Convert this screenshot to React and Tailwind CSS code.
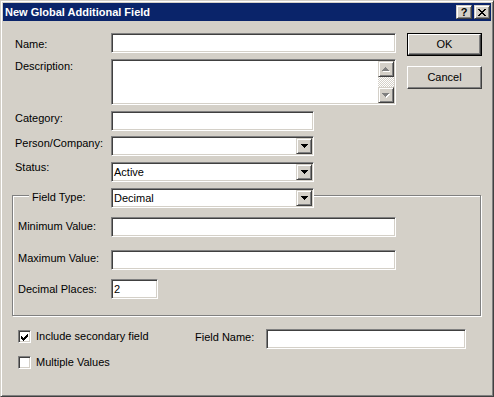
import React from 'react'

const sunken =
  'border border-t-[#808080] border-l-[#808080] border-r-white border-b-white shadow-[inset_1px_1px_0_#404040,inset_-1px_-1px_0_#d4d0c8] bg-white p-[1px]'
const raised =
  'border border-t-[#d4d0c8] border-l-[#d4d0c8] border-r-[#404040] border-b-[#404040] shadow-[inset_1px_1px_0_#fff,inset_-1px_-1px_0_#808080] bg-[#d4d0c8]'
const pushBtn =
  'border border-t-white border-l-white border-r-[#404040] border-b-[#404040] shadow-[inset_-1px_-1px_0_#808080] bg-[#d4d0c8]'

// pixel arrows, classic 7x4
const DOWN = 'M0 0h7v1H0z M1 1h5v1H1z M2 2h3v1H2z M3 3h1v1H3z'
const UP = 'M3 0h1v1H3z M2 1h3v1H2z M1 2h5v1H1z M0 3h7v1H0z'
const CHECK =
  'M6 0h1v1h-1z M5 1h2v1h-2z M0 2h1v1H0z M4 2h3v1H4z M0 3h2v1H0z M3 3h3v1H3z M0 4h5v1H0z M1 5h3v1H1z M2 6h1v1H2z'
const CLOSE =
  'M0 0h2v1H0z M6 0h2v1H6z M1 1h2v1H1z M5 1h2v1H5z M2 2h4v1H2z M3 3h2v1H3z M2 4h4v1H2z M1 5h2v1H1z M5 5h2v1H5z M0 6h2v1H0z M6 6h2v1H6z'

function Arrow({ d, disabled }) {
  if (disabled) {
    return (
      <svg width="8" height="5" shapeRendering="crispEdges">
        <path d={d} fill="#fff" transform="translate(1 1)" />
        <path d={d} fill="#808080" />
      </svg>
    )
  }
  return (
    <svg width="7" height="4" shapeRendering="crispEdges">
      <path d={d} fill="#000" />
    </svg>
  )
}

function Edit({ w, children }) {
  return (
    <div className={`${sunken} ${w} h-[20px] flex items-center`}>
      <span className="pl-[1px]">{children}</span>
    </div>
  )
}

function Combo({ value }) {
  return (
    <div className={`${sunken} w-[203px] h-[20px] flex items-center`}>
      <span className="flex-1 pl-[1px]">{value}</span>
      <div className={`${raised} w-[16px] h-[16px] flex items-center justify-center`}>
        <Arrow d={DOWN} />
      </div>
    </div>
  )
}

function Checkbox({ checked }) {
  return (
    <div className={`${sunken} w-[13px] h-[13px] p-[2px] flex items-start`}>
      {checked && (
        <svg width="7" height="7" shapeRendering="crispEdges" className="mt-[1px]">
          <path d={CHECK} fill="#000" />
        </svg>
      )}
    </div>
  )
}

export default function App() {
  return (
    <div className="w-[494px] h-[397px] bg-[#d4d0c8] border border-t-[#d4d0c8] border-l-[#d4d0c8] border-r-[#404040] border-b-[#404040] shadow-[inset_1px_1px_0_#fff,inset_-1px_-1px_0_#808080] p-[2px] flex flex-col overflow-hidden font-['Liberation_Sans',Arial,sans-serif] text-[11px] leading-[13px] text-black">
      {/* Title bar */}
      <div className="h-[18px] bg-[#0a246a] flex items-center pl-[2px] pr-[1px] gap-[2px]">
        <span className="flex-1 text-white font-bold">New Global Additional Field</span>
        <div className={`${raised} w-[16px] h-[14px] flex items-center justify-center font-bold text-[11px] leading-none`}>?</div>
        <div className={`${raised} w-[16px] h-[14px] flex items-center justify-center`}>
          <svg width="8" height="7" shapeRendering="crispEdges">
            <path d={CLOSE} fill="#000" />
          </svg>
        </div>
      </div>

      <div className="flex-1 px-[9px] flex flex-col">
        {/* Top fields + buttons */}
        <div className="flex pl-[3px] pt-[12px] gap-[11px]">
          <div className="w-[381px] flex flex-col">
            <div className="flex items-start">
              <span className="w-[96px] pt-[5px]">Name:</span>
              <Edit w="w-[285px]" />
            </div>
            <div className="flex items-start mt-[6px]">
              <span className="w-[96px] pt-[1px]">Description:</span>
              <div className={`${sunken} w-[285px] h-[46px] flex`}>
                <div className="flex-1" />
                <div className="w-[16px] flex flex-col">
                  <div className={`${raised} h-[16px] flex items-center justify-center`}>
                    <Arrow d={UP} disabled />
                  </div>
                  <div className="flex-1 bg-[image:repeating-conic-gradient(#fff_0_25%,#d4d0c8_0_50%)] bg-[length:2px_2px]" />
                  <div className={`${raised} h-[16px] flex items-center justify-center`}>
                    <Arrow d={DOWN} disabled />
                  </div>
                </div>
              </div>
            </div>
            <div className="flex items-start mt-[6px]">
              <span className="w-[96px] pt-[1px]">Category:</span>
              <Edit w="w-[203px]" />
            </div>
            <div className="flex items-start mt-[5px]">
              <span className="w-[96px] pt-[1px]">Person/Company:</span>
              <Combo value="" />
            </div>
            <div className="flex items-start mt-[6px]">
              <span className="w-[96px] -mt-[1px]">Status:</span>
              <Combo value="Active" />
            </div>
          </div>

          <div className="flex flex-col gap-[10px]">
            <div className="w-[75px] h-[23px] border border-black">
              <div className={`${pushBtn} h-full flex items-center justify-center`}>OK</div>
            </div>
            <div className={`${pushBtn} w-[75px] h-[23px] flex items-center justify-center`}>Cancel</div>
          </div>
        </div>

        {/* Field type group */}
        <div className="mt-[13px] w-[469px] border border-[#808080] shadow-[inset_1px_1px_0_#fff,1px_1px_0_#fff] pb-[16px] flex flex-col">
          <div className="-mt-[8px] ml-[16px] flex w-fit">
            <span className="w-[82px] h-[20px] pl-[3px] pt-[3px] bg-[#d4d0c8]">Field Type:</span>
            <Combo value="Decimal" />
          </div>
          <div className="flex items-start mt-[9px] pl-[5px]">
            <span className="w-[93px] pt-[3px]">Minimum Value:</span>
            <Edit w="w-[285px]" />
          </div>
          <div className="flex items-start mt-[13px] pl-[5px]">
            <span className="w-[93px] pt-[2px]">Maximum Value:</span>
            <Edit w="w-[285px]" />
          </div>
          <div className="flex items-start mt-[9px] pl-[5px]">
            <span className="w-[93px] pt-[4px]">Decimal Places:</span>
            <Edit w="w-[47px]">2</Edit>
          </div>
        </div>

        {/* Secondary options */}
        <div className="flex items-start mt-[13px] pl-[6px]">
          <div className="w-[177px] mt-[1px] flex items-center gap-[5px]">
            <Checkbox checked />
            <span>Include secondary field</span>
          </div>
          <span className="w-[71px] pt-[2px]">Field Name:</span>
          <Edit w="w-[200px]" />
        </div>
        <div className="flex items-center gap-[5px] mt-[7px] pl-[6px]">
          <Checkbox />
          <span>Multiple Values</span>
        </div>
      </div>
    </div>
  )
}
